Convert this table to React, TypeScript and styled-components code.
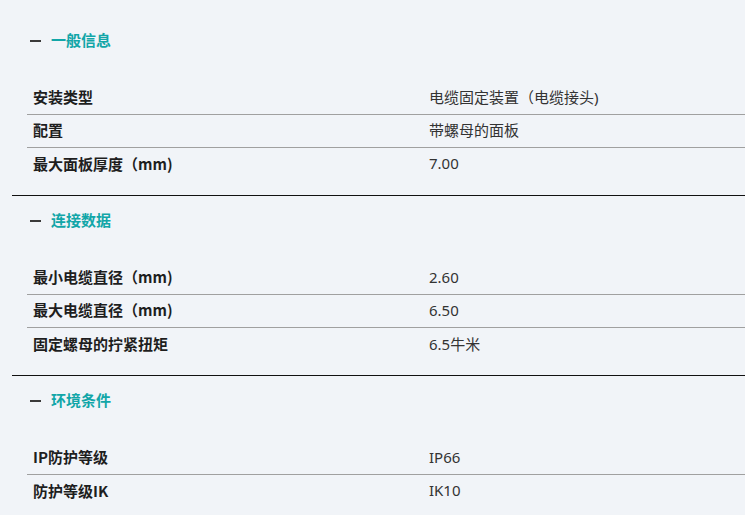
import styled, { createGlobalStyle } from "styled-components";

const GlobalStyle = createGlobalStyle`
  html, body {
    margin: 0;
    padding: 0;
    background: #f1f4f8;
  }
  body {
    font-family: "Noto Sans", "Noto Sans CJK SC", sans-serif;
  }
`;

const Page = styled.div`
  padding: 16px 0 0 12px;
  width: 733px;
  overflow: hidden;
`;

const Section = styled.section<{ last?: boolean }>`
  padding: 14px 0 14px 0;
  border-bottom: ${({ last }) => (last ? "none" : "1px solid #111")};
`;

const Header = styled.div`
  display: flex;
  align-items: center;
  gap: 10px;
  height: 20px;
  padding-left: 18px;
  margin-bottom: 32px;
`;

const Minus = styled.span`
  display: inline-block;
  width: 11px;
  height: 2px;
  margin-top: 1px;
  background: #3a3a3a;
`;

const Title = styled.span`
  font-family: "Noto Sans CJK SC", sans-serif;
  font-size: 15px;
  font-weight: 700;
  color: #12a6a8;
  line-height: 20px;
  margin-top: -1px;
`;

const Table = styled.div`
  margin-left: 15px;
`;

const Row = styled.div<{ last?: boolean }>`
  display: grid;
  grid-template-columns: 402px 1fr;
  align-items: center;
  height: 33px;
  padding-bottom: 3px;
  border-bottom: ${({ last }) => (last ? "none" : "1px solid #a0a0a0")};
  box-sizing: border-box;
`;

const Label = styled.span`
  padding-left: 6px;
  font-family: "Noto Sans CJK SC", sans-serif;
  font-size: 15px;
  font-weight: 700;
  color: #1e1e1e;
`;

const Value = styled.span`
  font-family: "Noto Sans", "Noto Sans CJK SC", sans-serif;
  font-size: 15px;
  color: #333333;
`;

const sections = [
  {
    title: "一般信息",
    rows: [
      ["安装类型", "电缆固定装置（电缆接头)"],
      ["配置", "带螺母的面板"],
      ["最大面板厚度（mm)", "7.00"],
    ],
  },
  {
    title: "连接数据",
    rows: [
      ["最小电缆直径（mm)", "2.60"],
      ["最大电缆直径（mm)", "6.50"],
      ["固定螺母的拧紧扭矩", "6.5牛米"],
    ],
  },
  {
    title: "环境条件",
    rows: [
      ["IP防护等级", "IP66"],
      ["防护等级IK", "IK10"],
    ],
  },
];

export default function App() {
  return (
    <>
      <GlobalStyle />
      <Page>
        {sections.map((s, si) => (
          <Section key={s.title} last={si === sections.length - 1}>
            <Header>
              <Minus />
              <Title>{s.title}</Title>
            </Header>
            <Table>
              {s.rows.map(([label, value], ri) => (
                <Row key={label} last={ri === s.rows.length - 1}>
                  <Label>{label}</Label>
                  <Value>{value}</Value>
                </Row>
              ))}
            </Table>
          </Section>
        ))}
      </Page>
    </>
  );
}
